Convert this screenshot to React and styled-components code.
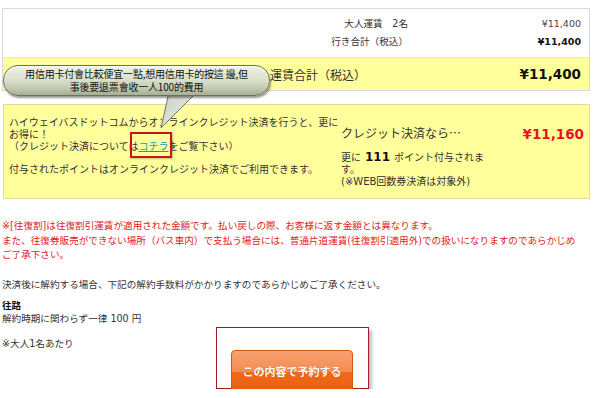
import React from "react";
import styled, { createGlobalStyle } from "styled-components";

const Global = createGlobalStyle`
  html, body { margin: 0; padding: 0; background: #fff; }
  body {
    font-family: "DejaVu Sans", "Noto Sans CJK JP", sans-serif;
    font-size: 9.6px;
    color: #222;
  }
`;

const Page = styled.div`
  position: relative;
  width: 588px;
  padding: 8px 10px 0 2px;
`;

const FareBox = styled.div`
  border: 1px solid #d9d9d9;
`;

const FareRows = styled.div`
  display: flex;
  flex-direction: column;
  gap: 4px;
  padding: 8px 0;
`;

const FareRow = styled.div`
  display: grid;
  grid-template-columns: 1fr 173px;
  padding-right: 8px;
  line-height: 14px;
`;

const FareLabel = styled.div`
  text-align: right;
  color: #333;
`;

const FareValue = styled.div`
  text-align: right;
  font-size: 9.5px;
  font-weight: ${(p) => (p.$bold ? 700 : 400)};
  color: ${(p) => (p.$bold ? "#111" : "#444")};
`;

const TotalRow = styled.div`
  display: grid;
  grid-template-columns: 1fr auto;
  align-items: center;
  height: 33px;
  padding: 0 8px 0 267px;
  background: #ffff9c;
  border-top: 1px solid #ecec9a;
  box-sizing: border-box;
`;

const TotalLabel = styled.div`
  font-family: "Noto Sans CJK JP", sans-serif;
  font-size: 12px;
  color: #333;
`;

const Price = styled.div`
  font-family: "DejaVu Sans", sans-serif;
  font-size: 13.5px;
  font-weight: 700;
  color: ${(p) => p.$color || "#111"};
`;

const CreditBox = styled.div`
  margin-top: 13px;
  height: 95px;
  box-sizing: border-box;
  margin-left: 1px;
  display: grid;
  grid-template-columns: 332px 160px 1fr;
  align-items: start;
  padding: 0 5px 0 5px;
  background: #ffff9c;
  border: 1px solid #e0dca0;
`;

const CreditText = styled.div`
  padding-top: 12px;
  line-height: 12px;
  font-size: 10px;
  color: #333;
`;

const Blank = styled.div`
  height: 11px;
`;

const Link = styled.span`
  position: relative;
  color: #1799b5;
  text-decoration: underline;
  &::after {
    content: "";
    position: absolute;
    left: -9px;
    right: -3px;
    top: -9px;
    bottom: -6px;
    border: 2px solid #c8141a;
    box-shadow: 1px 1px 2px rgba(0, 0, 0, 0.25);
    pointer-events: none;
  }
`;

const CreditMid = styled.div`
  padding-top: 21px;
  padding-left: 0;
  font-size: 10px;
  line-height: 12px;
  color: #333;
`;

const MidTitle = styled.div`
  font-family: "Noto Sans CJK JP", sans-serif;
  font-size: 12px;
  line-height: 14px;
  color: #333;
  margin-bottom: 11px;
`;

const Points = styled.b`
  font-size: 12px;
  margin: 0 4px;
  color: #111;
`;

const CreditPriceCell = styled.div`
  padding-top: 21px;
  text-align: right;
`;

const Notes = styled.div`
  margin-top: 20px;
  line-height: 14.5px;
  color: #e31b1b;
`;

const Plain = styled.div`
  margin-top: ${(p) => p.$top || 0}px;
  line-height: ${(p) => p.$lh || 13}px;
  color: #333;
`;

const Bottom = styled.div`
  display: grid;
  margin-top: 8px;
`;

const CancelInfo = styled.div`
  grid-area: 1 / 1;
  line-height: 13px;
  color: #333;
`;

const Strong = styled.div`
  font-weight: 700;
  color: #111;
`;

const Gap = styled.div`
  height: 12px;
`;

const ButtonArea = styled.div`
  grid-area: 1 / 1;
  justify-self: center;
  margin-top: 28px;
  margin-left: -8px;
  width: 153px;
  height: 62px;
  box-sizing: border-box;
  border: 1px solid #9e1b22;
  box-shadow: 3px 3px 3px rgba(0, 0, 0, 0.25);
  background: #fff;
  display: flex;
  justify-content: center;
  padding-top: 22px;
`;

const Button = styled.button`
  width: 122px;
  height: 48px;
  flex-shrink: 0;
  border: 1px solid #d4560f;
  border-radius: 4px;
  background: linear-gradient(
    to bottom,
    #f8a070 0%,
    #f58c52 45%,
    #ef6a1a 46%,
    #e95b0b 100%
  );
  color: #fff;
  font-family: "Noto Sans CJK JP", sans-serif;
  font-size: 11px;
  font-weight: 700;
  padding: 0 0 6px;
  text-shadow: 0 0 1px rgba(120, 40, 0, 0.6);
  cursor: pointer;
`;

const Bubble = styled.div`
  position: absolute;
  left: 3px;
  top: 65px;
`;

const BubbleBody = styled.div`
  position: relative;
  width: 267px;
  height: 31px;
  box-sizing: border-box;
  border: 1px solid #68705f;
  border-radius: 15px;
  background: linear-gradient(
    to bottom,
    #eef1e4 0%,
    #dce2cc 45%,
    #bfc6ad 80%,
    #a5ad92 100%
  );
  box-shadow: 1px 2px 2px rgba(0, 0, 0, 0.4),
    inset 0 1px 2px rgba(255, 255, 255, 0.9);
  text-align: center;
  font-family: "Noto Sans CJK TC", sans-serif;
  font-size: 10px;
  line-height: 13px;
  color: #111;
  padding-top: 1px;
  letter-spacing: -0.2px;
`;

const Tail = styled.svg`
  position: absolute;
  left: 152px;
  top: 27px;
  overflow: visible;
`;

export default function App() {
  return (
    <>
      <Global />
      <Page>
        <FareBox>
          <FareRows>
            <FareRow>
              <FareLabel>大人運賃　2名</FareLabel>
              <FareValue>¥11,400</FareValue>
            </FareRow>
            <FareRow>
              <FareLabel>行き合計（税込）</FareLabel>
              <FareValue $bold>¥11,400</FareValue>
            </FareRow>
          </FareRows>
          <TotalRow>
            <TotalLabel>運賃合計（税込）</TotalLabel>
            <Price>¥11,400</Price>
          </TotalRow>
        </FareBox>

        <CreditBox>
          <CreditText>
            ハイウェイバスドットコムからオンラインクレジット決済を行うと、更に
            <br />
            お得に！
            <br />
            （クレジット決済については<Link>コチラ</Link>をご覧下さい）
            <Blank />
            付与されたポイントはオンラインクレジット決済でご利用できます。
          </CreditText>
          <CreditMid>
            <MidTitle>クレジット決済なら…</MidTitle>
            更に<Points>111</Points>ポイント付与されま
            <br />
            す。
            <br />
            (※WEB回数券決済は対象外)
          </CreditMid>
          <CreditPriceCell>
            <Price $color="#e8141b">¥11,160</Price>
          </CreditPriceCell>
        </CreditBox>

        <Notes>
          ※[往復割]は往復割引運賃が適用された金額です。払い戻しの際、お客様に返す金額とは異なります。
          <br />
          また、往復券販売ができない場所（バス車内）で支払う場合には、普通片道運賃(往復割引適用外)での扱いになりますのであらかじめ
          <br />
          ご了承下さい。
        </Notes>

        <Plain $top={15}>
          決済後に解約する場合、下記の解約手数料がかかりますのであらかじめご了承ください。
        </Plain>

        <Bottom>
          <CancelInfo>
            <Strong>往路</Strong>
            解約時期に関わらず一律 100 円
            <Gap />
            ※大人1名あたり
          </CancelInfo>
          <ButtonArea>
            <Button>この内容で予約する</Button>
          </ButtonArea>
        </Bottom>

        <Bubble>
          <Tail width="50" height="40" viewBox="0 0 50 40">
            <defs>
              <linearGradient id="tailg" x1="0" y1="0" x2="1" y2="1">
                <stop offset="0" stopColor="#c9cfbb" />
                <stop offset="1" stopColor="#eef1f4" />
              </linearGradient>
            </defs>
            <polygon
              points="14,0 42,0 6,36"
              fill="url(#tailg)"
              stroke="#6d7566"
              strokeWidth="1"
            />
          </Tail>
          <BubbleBody>
            用信用卡付會比較便宜一點,想用信用卡的按這 邊,但
            <br />
            事後要退票會收一人100的費用
          </BubbleBody>
        </Bubble>
      </Page>
    </>
  );
}
